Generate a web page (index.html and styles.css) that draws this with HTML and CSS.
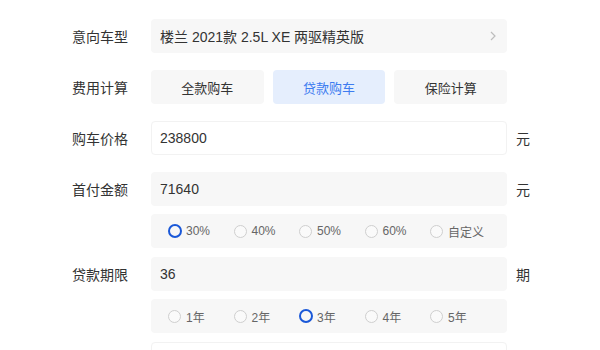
FILE: index.html
```html
<!DOCTYPE html>
<html lang="zh-CN">
<head>
    <meta charset="UTF-8">
    <meta name="viewport" content="width=device-width, initial-scale=1.0">
    <title>购车计算器</title>
    <link rel="stylesheet" href="styles.css">
</head>
<body>
    <div class="calc">
        <div class="row">
            <div class="label">意向车型</div>
            <div class="field select">
                <span>楼兰 2021款 2.5L XE 两驱精英版</span>
                <svg class="arrow" width="6" height="10" viewBox="0 0 6 10"><polyline points="1,1 5,5 1,9" fill="none" stroke="#bdbdbd" stroke-width="1.2"/></svg>
            </div>
        </div>
        <div class="row">
            <div class="label">费用计算</div>
            <div class="tabs">
                <div class="tab">全款购车</div>
                <div class="tab active">贷款购车</div>
                <div class="tab">保险计算</div>
            </div>
        </div>
        <div class="row">
            <div class="label">购车价格</div>
            <div class="field white">238800</div>
            <div class="unit">元</div>
        </div>
        <div class="row">
            <div class="label">首付金额</div>
            <div class="field">71640</div>
            <div class="unit">元</div>
        </div>
        <div class="row opts">
            <div class="label"></div>
            <div class="radios">
                <label class="radio checked"><i></i>30%</label>
                <label class="radio"><i></i>40%</label>
                <label class="radio"><i></i>50%</label>
                <label class="radio"><i></i>60%</label>
                <label class="radio"><i></i>自定义</label>
            </div>
        </div>
        <div class="row">
            <div class="label">贷款期限</div>
            <div class="field">36</div>
            <div class="unit">期</div>
        </div>
        <div class="row opts">
            <div class="label"></div>
            <div class="radios">
                <label class="radio"><i></i>1年</label>
                <label class="radio"><i></i>2年</label>
                <label class="radio checked"><i></i>3年</label>
                <label class="radio"><i></i>4年</label>
                <label class="radio"><i></i>5年</label>
            </div>
        </div>
        <!-- next row starts just above the fold -->
        <div class="row">
            <div class="label"></div>
            <div class="field white"></div>
        </div>
    </div>
</body>
</html>
```

FILE: styles.css
```css
html { overflow: hidden; }
body { margin: 0; font-family: "Liberation Sans", "Noto Sans CJK SC", sans-serif; color: #333; background: #fff; }
.calc { padding: 19px 0 0 72px; }
.row { display: flex; align-items: center; }
.row + .row { margin-top: 17px; }
.row + .opts { margin-top: 8px; }
.opts + .row { margin-top: 9px; }
.label { width: 79px; flex-shrink: 0; font-size: 14px; color: #333; }
.field { width: 356px; height: 34px; box-sizing: border-box; padding: 0 9px; display: flex; align-items: center; font-size: 14px; background: #f7f7f7; border-radius: 4px; }
.field.white { background: #fff; border: 1px solid #f2f2f2; padding-left: 8px; }
.select { justify-content: space-between; padding-right: 11px; }
.unit { margin-left: 9px; font-size: 14px; }
.tabs { width: 356px; display: grid; grid-template-columns: repeat(3, 1fr); gap: 9px; }
.tab { height: 34px; display: flex; align-items: center; justify-content: center; font-size: 13px; background: #f7f7f7; border-radius: 4px; }
.tab.active { background: #e5eefd; color: #3d7cf0; }
.radios { width: 356px; height: 34px; box-sizing: border-box; padding-left: 17px; display: flex; align-items: center; background: #f7f7f7; border-radius: 4px; }
.radio { width: 65.5px; display: flex; align-items: center; font-size: 12px; color: #666; }
.radio i { width: 13px; height: 13px; box-sizing: border-box; border: 1px solid #cfcfcf; border-radius: 50%; background: #fafafa; margin-right: 5px; }
.radio.checked i { width: 14px; height: 14px; border: 2.5px solid #1a58d8; background: transparent; margin-right: 4px; }
```
